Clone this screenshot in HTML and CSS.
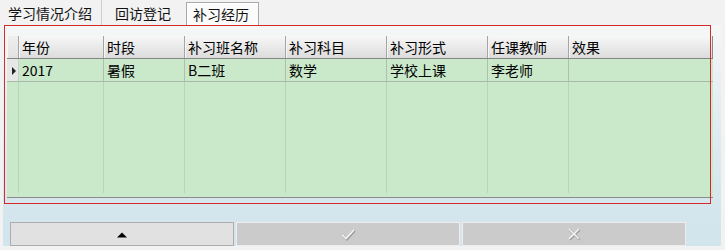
FILE: index.html
```html
<!DOCTYPE html>
<html>
<head>
<meta charset="utf-8">
<link rel="stylesheet" href="styles.css">
</head>
<body>
<div class="tabs">
  <div class="tab first">学习情况介绍</div>
  <div class="tab second">回访登记</div>
  <div class="tab active">补习经历</div>
</div>
<div class="panel">
  <div class="grid">
    <div class="row head">
      <div class="cell ind"></div>
      <div class="cell">年份</div>
      <div class="cell">时段</div>
      <div class="cell">补习班名称</div>
      <div class="cell">补习科目</div>
      <div class="cell">补习形式</div>
      <div class="cell">任课教师</div>
      <div class="cell last">效果</div>
    </div>
    <div class="row data">
      <div class="cell ind"><span class="arrow"></span></div>
      <div class="cell">2017</div>
      <div class="cell">暑假</div>
      <div class="cell">B二班</div>
      <div class="cell">数学</div>
      <div class="cell">学校上课</div>
      <div class="cell">李老师</div>
      <div class="cell last"></div>
    </div>
    <div class="row filler">
      <div class="cell ind"></div>
      <div class="cell"></div>
      <div class="cell"></div>
      <div class="cell"></div>
      <div class="cell"></div>
      <div class="cell"></div>
      <div class="cell"></div>
      <div class="cell last"></div>
    </div>
  </div>
  <div class="buttons">
    <div class="btn enabled">
      <svg width="12" height="7" viewBox="0 0 12 7"><polygon points="1,6.5 11,6.5 6,1.5" fill="#000"/></svg>
    </div>
    <div class="btn disabled">
      <svg width="16" height="14" viewBox="0 0 16 14">
        <polyline points="2.5,8 6,11.5 14,3" fill="none" stroke="#9a9a9a" stroke-width="2.2" transform="translate(0.8,0.8)"/>
        <polyline points="2.5,8 6,11.5 14,3" fill="none" stroke="#f4f4f4" stroke-width="1.6"/>
      </svg>
    </div>
    <div class="btn disabled">
      <svg width="14" height="14" viewBox="0 0 14 14">
        <g fill="none" stroke="#9a9a9a" stroke-width="2.6" transform="translate(0.6,0.6)">
          <line x1="2" y1="2" x2="12" y2="12"/><line x1="12" y1="2" x2="2" y2="12"/>
        </g>
        <g fill="none" stroke="#f4f4f4" stroke-width="1.6">
          <line x1="2" y1="2" x2="12" y2="12"/><line x1="12" y1="2" x2="2" y2="12"/>
        </g>
      </svg>
    </div>
  </div>
  <div class="frame"></div>
</div>
</body>
</html>
```
FILE: styles.css
```css
html, body {
  margin: 0;
  padding: 0;
}
body {
  width: 725px;
  height: 250px;
  overflow: hidden;
  background: #f2f2f2;
  font-family: "Noto Sans CJK SC", "Microsoft YaHei", sans-serif;
  font-size: 14px;
  color: #000;
}
.tabs {
  display: flex;
  height: 25px;
}
.tab {
  box-sizing: border-box;
  padding-top: 1px;
  line-height: 24px;
  white-space: nowrap;
  color: #111;
}
.tab.first {
  width: 102px;
  padding-left: 8px;
  border-right: 1px solid #cfcfcf;
}
.tab.second {
  width: 84px;
  padding-left: 13px;
}
.tab.active {
  margin-top: 2px;
  width: 73px;
  padding-left: 6px;
  padding-top: 0;
  line-height: 23px;
  border: 1px solid #a9a9a9;
  border-bottom: none;
  background: #fbfbfb;
  box-shadow: inset 1px 1px 0 #ffffff;
}
.panel {
  position: relative;
  margin-left: 3px;
  width: 718px;
  height: 221px;
  background: linear-gradient(#f6f7f7 0%, #e6eff3 30%, #d6e7ee 75%, #d2e4ec 100%);
  display: flex;
  flex-direction: column;
}
.grid {
  margin-left: 4px;
  margin-top: 11px;
  width: 706px;
  background: #c9e9ca;
  border-bottom: 1px solid #8a8a8a;
  display: flex;
  flex-direction: column;
}
.row {
  display: grid;
  grid-template-columns: 12px 85px 81px 101px 101px 101px 81px 144px;
}
.cell {
  box-sizing: border-box;
  padding-left: 3px;
  white-space: nowrap;
  overflow: hidden;
}
.head {
  height: 23px;
  background: linear-gradient(#f7f7f7, #dcdcdc);
  border-bottom: 1px solid #858585;
  box-sizing: border-box;
}
.head .cell {
  line-height: 22px;
  border-right: 1px solid #a5a5a5;
  box-shadow: inset 1px 0 0 #f6f6f6;
}
.head .cell.ind {
  background: linear-gradient(#efefef, #e2e2e2);
}
.data {
  height: 23px;
  border-bottom: 1px solid #a9b7a9;
  box-sizing: border-box;
}
.data .cell {
  line-height: 22px;
  border-right: 1px solid #b2bdb2;
}
.data .cell.ind {
  background: #e6e8e6;
  position: relative;
  border-right: 1px solid #c8cfc8;
}
.arrow {
  position: absolute;
  left: 5px;
  top: 8px;
  width: 0;
  height: 0;
  border-top: 4px solid transparent;
  border-bottom: 4px solid transparent;
  border-left: 4px solid #222;
}
.filler {
  height: 115px;
  padding-bottom: 4px;
  box-sizing: border-box;
}
.filler .cell {
  border-right: 1px solid #b6d6b7;
}
.filler .cell.last, .data .cell.last {
  border-right: none;
}
.head .cell.last {
  border-right: 1px solid #8a8a8a;
}
.buttons {
  display: flex;
  gap: 2px;
  margin-top: 24px;
  margin-left: 7px;
}
.btn {
  box-sizing: border-box;
  width: 224px;
  height: 24px;
  display: flex;
  align-items: center;
  justify-content: center;
}
.btn.enabled {
  background: #e1e1e1;
  border: 1px solid #adadad;
}
.btn.disabled {
  background: #cbcbcb;
  border: 1px solid #ededed;
}
.frame {
  position: absolute;
  left: 1px;
  top: 0;
  width: 705px;
  height: 177px;
  border: 1px solid #d42a2a;
  pointer-events: none;
}
```
